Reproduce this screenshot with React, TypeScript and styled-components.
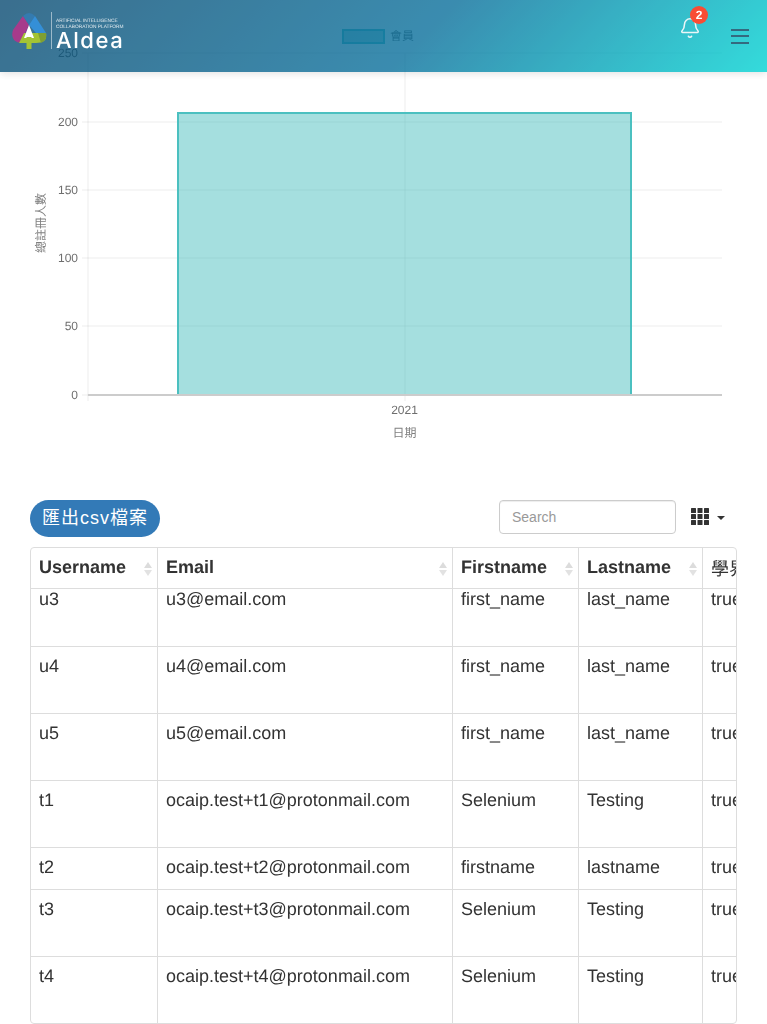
import styled, { createGlobalStyle } from "styled-components";
import { Bell } from "lucide-react";

const GlobalStyle = createGlobalStyle`
  html, body {
    margin: 0;
    padding: 0;
    background: #fff;
    font-family: "Liberation Sans", "Noto Sans CJK TC", sans-serif;
    color: #333;
    text-rendering: geometricPrecision;
  }
  * { box-sizing: border-box; }
`;

const columns = [126, 295, 126, 124, 100];
const headers = ["Username", "Email", "Firstname", "Lastname", "學界"];

const rows = [
  { username: "u3", email: "u3@email.com", first: "first_name", last: "last_name", tall: true },
  { username: "u4", email: "u4@email.com", first: "first_name", last: "last_name", tall: true },
  { username: "u5", email: "u5@email.com", first: "first_name", last: "last_name", tall: true },
  { username: "t1", email: "ocaip.test+t1@protonmail.com", first: "Selenium", last: "Testing", tall: true },
  { username: "t2", email: "ocaip.test+t2@protonmail.com", first: "firstname", last: "lastname", tall: false },
  { username: "t3", email: "ocaip.test+t3@protonmail.com", first: "Selenium", last: "Testing", tall: true },
  { username: "t4", email: "ocaip.test+t4@protonmail.com", first: "Selenium", last: "Testing", tall: true },
];

const yTicks = [
  { label: "250", y: 53 },
  { label: "200", y: 122 },
  { label: "150", y: 190 },
  { label: "100", y: 258 },
  { label: "50", y: 326 },
  { label: "0", y: 395 },
];

const Chart = () => (
  <ChartSvg width={767} height={470} viewBox="0 0 767 470">
    {yTicks.map((t) => (
      <g key={t.label}>
        <line x1={82} x2={722} y1={t.y} y2={t.y} stroke="rgba(0,0,0,0.08)" />
        <text x={78} y={t.y + 4} textAnchor="end" fontSize={12} fill="#6e6e6e">
          {t.label}
        </text>
      </g>
    ))}
    <line x1={88} x2={88} y1={53} y2={401} stroke="rgba(0,0,0,0.08)" />
    <line x1={405} x2={405} y1={53} y2={401} stroke="rgba(0,0,0,0.08)" />
    <rect x={178} y={113} width={453} height={282} fill="rgba(75,192,192,0.5)" />
    <path d="M178 395 V113 H631 V395" fill="none" stroke="#4bc0c0" strokeWidth={2} />
    <line x1={88} x2={722} y1={395} y2={395} stroke="#ccc" strokeWidth={2} />
    <rect x={343} y={30} width={41} height={13} fill="rgba(75,192,192,0.5)" stroke="#4bc0c0" strokeWidth={2} />
    <text x={390} y={40} fontSize={12} fill="#6e6e6e">會員</text>
    <text x={404.5} y={414} textAnchor="middle" fontSize={12} fill="#6e6e6e">2021</text>
    <text x={404.5} y={437} textAnchor="middle" fontSize={12} fill="#808080">日期</text>
    <text
      transform="translate(45 223) rotate(-90)"
      textAnchor="middle"
      fontSize={12}
      fill="#808080"
    >
      總註冊人數
    </text>
  </ChartSvg>
);

const SortIcon = () => (
  <svg width={10} height={14} viewBox="0 0 10 14">
    <path d="M5 0 L9 6 H1 Z" fill="#dcdcdc" />
    <path d="M5 14 L9 8 H1 Z" fill="#e2e2e2" />
  </svg>
);

const LogoMark = () => (
  <svg width={36} height={38} viewBox="0 0 36 38">
    <path d="M11 4 L1 18 Q-1 24 2 28 Q5 31 10 31 L12 31 L17 13 Z" fill="#920b6f" />
    <path d="M11 4 Q17 -2 23 4 L17 13 Z" fill="#005a9c" />
    <path d="M23 4 L34 21 H24 L17 13 Z" fill="#0074ce" />
    <path d="M17 13 L7 31 L12 31 L17 22 Z" fill="#5f0b7c" />
    <path d="M12 21 H34 Q35 26 32 29 Q29 31 24 31 H7 Z" fill="#8db500" />
    <path d="M26 21 H34 Q35 26 32 29 L29 31 Z" fill="#5e8800" />
    <path d="M17 13 L22 26 H12 Z" fill="#fff" />
    <path d="M14.500 25 H19.500 V37 H14.500 Z" fill="#8db500" />
  </svg>
);

const App = () => (
  <Page>
    <GlobalStyle />
    <Header>
      <Logo>
        <LogoMark />
        <LogoDivider />
        <LogoText>
          <LogoCaption>ARTIFICIAL INTELLIGENCE</LogoCaption>
          <LogoCaption>COLLABORATION PLATFORM</LogoCaption>
          <LogoName>Aldea</LogoName>
        </LogoText>
      </Logo>
      <HeaderActions>
        <BellWrap>
          <Bell size={22} strokeWidth={1.7} color="#e6f4f6" />
          <Badge>2</Badge>
        </BellWrap>
        <Hamburger>
          <span />
          <span />
          <span />
        </Hamburger>
      </HeaderActions>
    </Header>

    <Chart />

    <Section>
      <Toolbar>
        <ExportButton>匯出csv檔案</ExportButton>
        <ToolbarRight>
          <SearchInput placeholder="Search" />
          <ColumnsToggle>
            <svg width={18} height={17} viewBox="0 0 18 17">
              {[0, 6.500, 13].map((x) =>
                [0, 6, 12].map((y) => (
                  <rect key={`${x}-${y}`} x={x} y={y} width={5} height={5} rx={0.5} fill="#333" />
                ))
              )}
            </svg>
            <Caret />
          </ColumnsToggle>
        </ToolbarRight>
      </Toolbar>

      <TableBox>
        <Table>
          <colgroup>
            {columns.map((w, i) => (
              <col key={i} width={w} />
            ))}
          </colgroup>
          <thead>
            <tr>
              {headers.map((h, i) => (
                <Th key={h} $light={i === 4}>
                  <ThInner>
                    <span>{h}</span>
                    {i < 4 && <SortIcon />}
                  </ThInner>
                </Th>
              ))}
            </tr>
          </thead>
        </Table>
        <BodyScroll>
          <ScrolledTable>
            <colgroup>
              {columns.map((w, i) => (
                <col key={i} width={w} />
              ))}
            </colgroup>
            <tbody>
              {rows.map((r) => (
                <Tr key={r.username} $tall={r.tall}>
                  <Td>{r.username}</Td>
                  <Td>{r.email}</Td>
                  <Td>{r.first}</Td>
                  <Td>{r.last}</Td>
                  <Td>true</Td>
                </Tr>
              ))}
            </tbody>
          </ScrolledTable>
        </BodyScroll>
      </TableBox>
    </Section>
  </Page>
);

const Page = styled.div`
  width: 767px;
  height: 1024px;
  overflow: hidden;
  opacity: 0.999;
`;

const Header = styled.header`
  position: fixed;
  top: 0;
  left: 0;
  width: 767px;
  height: 72px;
  z-index: 10;
  opacity: 0.8;
  display: flex;
  align-items: flex-start;
  justify-content: space-between;
  padding: 12px 18px 0 12px;
  background: linear-gradient(135deg, #094b72 0%, #09709c 55%, #00d3d3 100%);
  box-shadow: 0 2px 8px rgba(0, 0, 0, 0.15);
`;

const Logo = styled.div`
  display: flex;
  align-items: flex-start;
`;

const LogoDivider = styled.div`
  width: 1px;
  height: 37px;
  margin: 0 4px 0 3px;
  background: rgba(255, 255, 255, 0.5);
`;

const LogoText = styled.div`
  display: flex;
  flex-direction: column;
  padding-top: 7px;
  color: #fff;
`;

const LogoCaption = styled.div`
  font-family: "Liberation Sans", sans-serif;
  font-size: 4.800px;
  line-height: 6px;
  white-space: nowrap;
  opacity: 0.85;
`;

const LogoName = styled.div`
  font-family: "Inter", sans-serif;
  font-size: 22px;
  font-weight: 500;
  line-height: 21px;
  letter-spacing: 1.600px;
`;

const HeaderActions = styled.div`
  display: flex;
  align-items: flex-start;
  gap: 30px;
`;

const BellWrap = styled.div`
  position: relative;
  width: 22px;
  height: 22px;
  margin-top: 5px;
`;

const Badge = styled.div`
  position: absolute;
  top: -11px;
  left: 11px;
  width: 18px;
  height: 18px;
  border-radius: 50%;
  background: #f82000;
  color: #fff;
  font-size: 12px;
  font-weight: 700;
  line-height: 18px;
  text-align: center;
`;

const Hamburger = styled.div`
  display: flex;
  flex-direction: column;
  gap: 4.300px;
  margin-top: 17px;
  span {
    display: block;
    width: 18px;
    height: 2px;
    background: #00455f;
  }
`;

const ChartSvg = styled.svg`
  display: block;
  font-family: "Liberation Sans", "Noto Sans CJK TC", sans-serif;
`;

const Section = styled.section`
  padding: 30px 30px 0;
`;

const Toolbar = styled.div`
  display: flex;
  align-items: flex-start;
  justify-content: space-between;
  height: 47px;
`;

const ExportButton = styled.button`
  height: 37px;
  padding: 0 12px 5px;
  border: 0;
  border-radius: 18.500px;
  background: #337ab7;
  color: #fff;
  font-family: inherit;
  font-size: 18px;
  letter-spacing: 1px;
  white-space: nowrap;
`;

const ToolbarRight = styled.div`
  display: flex;
  align-items: flex-start;
  margin-right: 12px;
`;

const SearchInput = styled.input`
  width: 177px;
  height: 34px;
  padding: 6px 12px;
  border: 1px solid #ccc;
  border-radius: 4px;
  font-family: inherit;
  font-size: 14px;
  color: #555;
  box-shadow: inset 0 1px 1px rgba(0, 0, 0, 0.075);
  &::placeholder {
    color: #999;
  }
`;

const ColumnsToggle = styled.div`
  display: flex;
  align-items: center;
  gap: 8px;
  margin: 8px 0 0 15px;
`;

const Caret = styled.span`
  width: 0;
  height: 0;
  border-top: 4px solid #333;
  border-left: 4px solid transparent;
  border-right: 4px solid transparent;
  margin-top: 3px;
`;

const TableBox = styled.div`
  height: 477px;
  border: 1px solid #ddd;
  border-radius: 4px;
  overflow: hidden;
`;

const Table = styled.table`
  width: 771px;
  table-layout: fixed;
  border-collapse: separate;
  border-spacing: 0;
  font-size: 18px;
`;

const ScrolledTable = styled(Table)`
  margin-top: -10px;
`;

const BodyScroll = styled.div`
  overflow: hidden;
`;

const Th = styled.th<{ $light?: boolean }>`
  height: 41px;
  padding: 0 0 1px 8px;
  border-left: 1px solid #ddd;
  border-bottom: 1px solid #ddd;
  text-align: left;
  font-weight: ${({ $light }) => ($light ? 400 : 700)};
  white-space: nowrap;
  &:first-child {
    border-left: 0;
  }
`;

const ThInner = styled.div`
  display: flex;
  align-items: center;
  justify-content: space-between;
  padding-right: 4px;
  svg {
    margin-top: 3px;
  }
`;

const Tr = styled.tr<{ $tall: boolean }>`
  height: ${({ $tall }) => ($tall ? "67px" : "42px")};
`;

const Td = styled.td`
  padding: 7px 8px 9px;
  border-top: 1px solid #ddd;
  border-left: 1px solid #ddd;
  vertical-align: top;
  line-height: 25px;
  white-space: nowrap;
  &:first-child {
    border-left: 0;
  }
`;

export default App;
